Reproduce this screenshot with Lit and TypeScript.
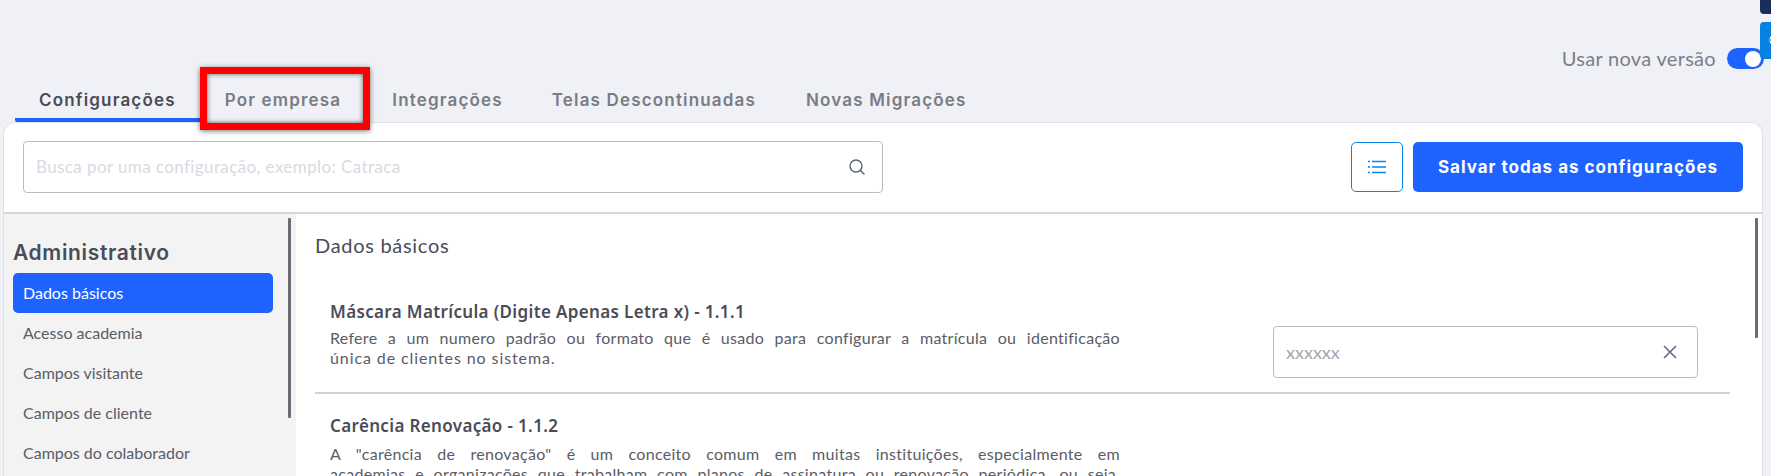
import { LitElement, html, css } from "lit";
import { customElement } from "lit/decorators.js";

@customElement("app-root")
export class AppRoot extends LitElement {
  static styles = css`
    :host { display: block; position: relative; width: 1771px; height: 476px; overflow: hidden; background: #eff1f6; font-family: "Lato", "Noto Sans", sans-serif; color: #4a4c57; }
    .toprow { height: 78px; box-sizing: border-box; padding: 47px 7px 0 0; display: flex; justify-content: flex-end; align-items: flex-start; gap: 11px; }
    .toprow span { font-size: 20px; line-height: 22px; color: #7d7f88; letter-spacing: .3px; }
    .toggle { width: 37px; height: 21px; margin-top: 1px; border-radius: 11px; background: #1f63ff; display: flex; align-items: center; justify-content: flex-end; padding-right: 3px; box-sizing: border-box; }
    .toggle i { width: 16px; height: 16px; border-radius: 50%; background: #fff; display: block; }
    .tabs { display: flex; padding-left: 15px; height: 44px; font-family: "Inter", sans-serif; font-weight: 600; font-size: 17px; letter-spacing: 1.17px; color: #7a7c85; }
    .tab { padding: 12px 25px 0 24px; box-sizing: border-box; line-height: 20px; white-space: nowrap; }
    .tab:nth-child(2) { padding-right: 27px; }
    .tab:nth-child(4) { padding-right: 26px; }
    .tab.on { color: #4a4c57; border-bottom: 4px solid #1f63ff; border-radius: 0 0 2px 2px; }
    .card { margin-left: 3px; width: 1760px; height: 400px; background: #fff; border-radius: 12px 12px 0 0; border: 1px solid #dfe0e6; border-width: 1px 1px 0 1px; box-sizing: border-box; overflow: hidden; }
    .head { height: 91px; box-sizing: border-box; border-bottom: 2px solid #d5d6dc; padding: 18px 19px 0 19px; display: flex; align-items: flex-start; }
    .search { width: 860px; height: 52px; box-sizing: border-box; border: 1px solid #bcbcc8; border-radius: 4px; display: flex; align-items: center; padding: 0 16px 0 12px; justify-content: space-between; color: #d8dae2; font-size: 17px; letter-spacing: .4px; }
    .search span { margin-top: -2px; }
    .search svg { display: block; }
    .listbtn { margin: 1px 0 0 auto; width: 52px; height: 50px; box-sizing: border-box; border: 1px solid #0a84e6; border-radius: 5px; display: flex; align-items: center; justify-content: center; }
    .save { margin: 1px 0 0 10px; width: 330px; height: 50px; background: #1f63ff; color: #fff; border-radius: 5px; display: flex; align-items: center; justify-content: center; font-family: "Inter", sans-serif; font-weight: 700; font-size: 17px; letter-spacing: 1px; }
    .body { display: flex; height: 320px; }
    .side { width: 292px; background: #f3f3f4; box-sizing: border-box; padding: 24px 23px 0 9px; flex: none; }
    .side h3 { margin: 0 0 5px 0; font-family: "Inter", sans-serif; font-weight: 600; font-size: 21px; letter-spacing: .65px; line-height: 30px; color: #4a4c57; }
    .item { height: 40px; line-height: 40px; padding-left: 10px; border-radius: 5px; font-size: 16px; color: #5a5c66; }
    .item.on { background: #1f63ff; color: #fff; }
    .main { flex: 1; padding: 19px 32px 0 19px; }
    .main h2 { margin: 0; font-weight: 400; font-size: 20px; line-height: 24px; color: #4a4c57; letter-spacing: .7px; }
    .row { display: flex; justify-content: space-between; align-items: flex-start; padding: 0 15px; box-sizing: border-box; }
    .row.one { height: 137px; padding-top: 43px; border-bottom: 2px solid #d2d2d6; }
    .row.one .ttl { margin-bottom: 4px; }
    .row.two { padding-top: 20px; }
    .row.two .ttl { margin-bottom: 6px; }
    .txt { width: 790px; }
    .ttl { font-family: "Noto Sans", sans-serif; font-weight: 600; font-size: 17px; letter-spacing: .35px; line-height: 24px; color: #4a4c57; }
    .desc { font-size: 16px; line-height: 20px; letter-spacing: .3px; color: #5a5c66; }
    .desc span { display: block; text-align: justify; text-align-last: justify; }
    .desc span.end { text-align-last: left; letter-spacing: .9px; }
    .field { width: 425px; height: 52px; margin: 26px 17px 0 0; box-sizing: border-box; border: 1px solid #bcbcc8; border-radius: 4px; display: flex; align-items: center; justify-content: space-between; padding: 0 20px 0 12px; color: #a4a6b0; font-size: 18px; }
    .bar { position: absolute; width: 3px; background: #6a6c74; border-radius: 1px; }
    .bar.a { left: 288px; top: 218px; height: 200px; }
    .bar.b { left: 1755px; top: 218px; height: 120px; }
    .mark { position: absolute; left: 200px; top: 67px; width: 170px; height: 63px; box-sizing: border-box; border: 7px solid #fe0000; box-shadow: 0 1px 5px rgba(0,0,0,.55), inset 0 0 5px rgba(0,0,0,.6); }
    .corner1 { position: absolute; left: 1760px; top: -6px; width: 20px; height: 20px; background: #1a2e5a; border-radius: 4px; }
    .corner2 { position: absolute; left: 1760px; top: 22px; width: 20px; height: 37px; background: #0682e4; border-radius: 4px 0 0 4px; overflow: hidden; }
    .corner2 svg { display: block; margin: 11px 0 0 8px; }
  `;
  render() {
    return html`
      <div class="toprow"><span>Usar nova versão</span><div class="toggle"><i></i></div></div>
      <div class="tabs">
        <div class="tab on">Configurações</div><div class="tab">Por empresa</div><div class="tab">Integrações</div><div class="tab">Telas Descontinuadas</div><div class="tab">Novas Migrações</div>
      </div>
      <div class="card">
        <div class="head">
          <div class="search"><span>Busca por uma configuração, exemplo: Catraca</span>
            <svg width="18" height="18" viewBox="0 0 18 18" fill="none" stroke="#5a6472" stroke-width="1.4" stroke-linecap="round"><circle cx="8" cy="8" r="6"/><path d="M12.5 12.5 16 16"/></svg>
          </div>
          <div class="listbtn"><svg width="18" height="14" viewBox="0 0 18 14" fill="none" stroke="#0a84e6" stroke-width="1.5"><path d="M4 1.5h14M4 7h14M4 12.5h14M0 1.5h2M0 7h2M0 12.5h2"/></svg></div>
          <div class="save">Salvar todas as configurações</div>
        </div>
        <div class="body">
          <div class="side">
            <h3>Administrativo</h3>
            <div class="item on">Dados básicos</div>
            <div class="item">Acesso academia</div>
            <div class="item">Campos visitante</div>
            <div class="item">Campos de cliente</div>
            <div class="item">Campos do colaborador</div>
          </div>
          <div class="main">
            <h2>Dados básicos</h2>
            <div class="row one">
              <div class="txt">
                <div class="ttl">Máscara Matrícula (Digite Apenas Letra x) - 1.1.1</div>
                <div class="desc"><span>Refere a um numero padrão ou formato que é usado para configurar a matrícula ou identificação</span><span class="end">única de clientes no sistema.</span></div>
              </div>
              <div class="field"><span>xxxxxx</span>
                <svg width="14" height="14" viewBox="0 0 14 14" fill="none" stroke="#5d6b7c" stroke-width="1.6"><path d="M1 1l12 12M13 1 1 13"/></svg>
              </div>
            </div>
            <div class="row two">
              <div class="txt">
                <div class="ttl">Carência Renovação - 1.1.2</div>
                <div class="desc"><span>A "carência de renovação" é um conceito comum em muitas instituições, especialmente em</span><span>academias e organizações que trabalham com planos de assinatura ou renovação periódica, ou seja,</span></div>
              </div>
            </div>
          </div>
        </div>
      </div>
      <div class="bar a"></div><div class="bar b"></div>
      <div class="mark"></div>
      <div class="corner1"></div>
      <div class="corner2"><svg width="14" height="16" viewBox="0 0 14 16"><circle cx="8" cy="7" r="6.5" fill="#fff"/><circle cx="3.5" cy="7" r="1.4" fill="#0682e4"/></svg></div>
    `;
  }
}
